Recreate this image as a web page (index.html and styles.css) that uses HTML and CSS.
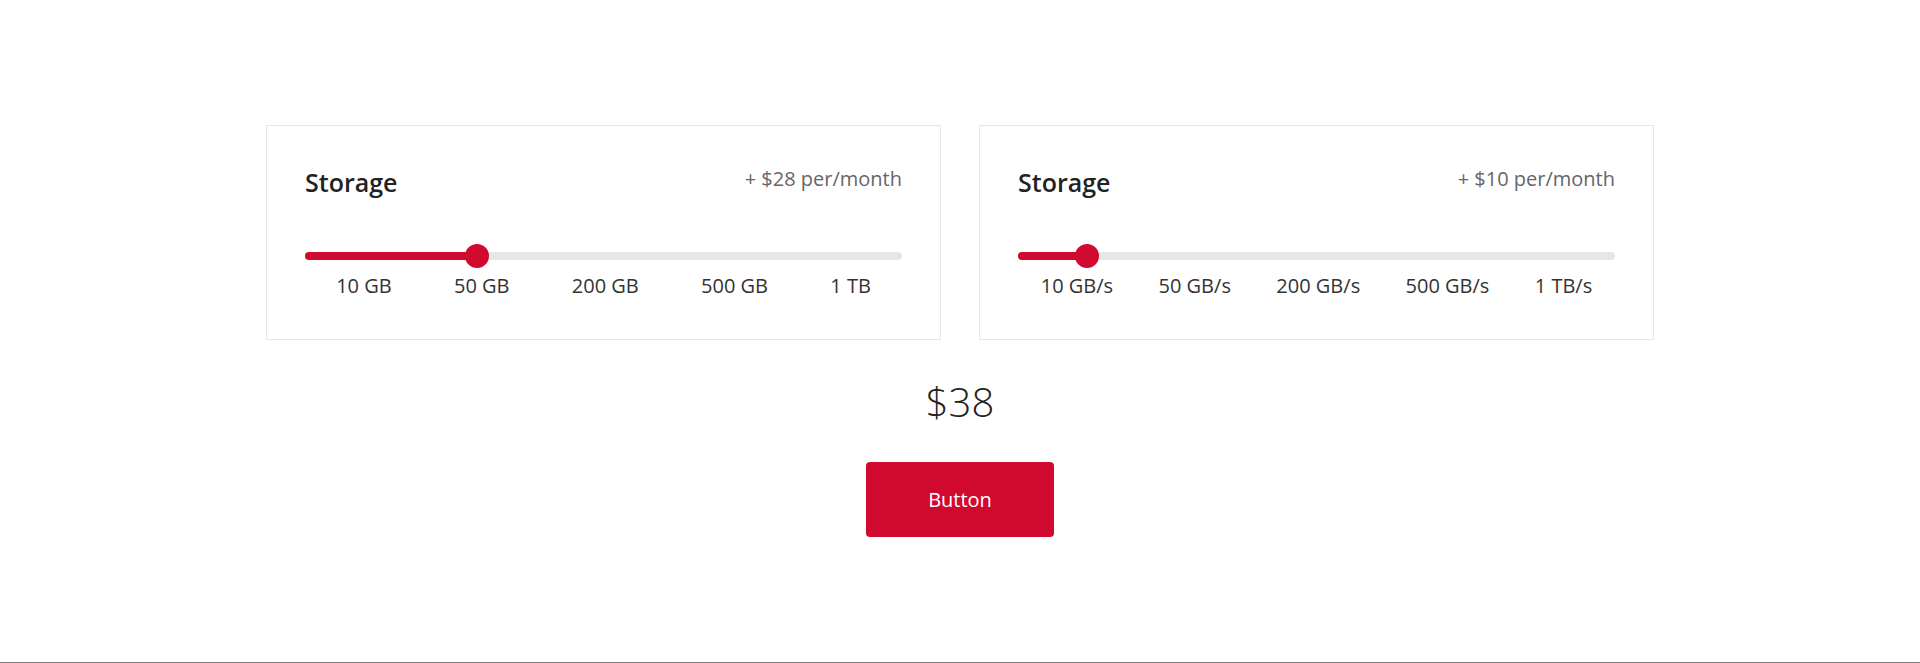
FILE: index.html
```html
<!DOCTYPE html>
<html lang="en">
<head>
<meta charset="utf-8">
<title>Storage pricing</title>
<link rel="stylesheet" href="styles.css">
</head>
<body>
<div class="page">
  <div class="cards">
    <section class="card">
      <div class="card-head">
        <h2 class="card-title">Storage</h2>
        <span class="card-price">+ $28 per/month</span>
      </div>
      <div class="slider">
        <div class="track">
          <div class="fill" style="width: 172px"></div>
          <div class="thumb" style="left: 172px"></div>
        </div>
      </div>
      <div class="labels">
        <span>10 GB</span><span>50 GB</span><span>200 GB</span><span>500 GB</span><span>1 TB</span>
      </div>
    </section>
    <section class="card">
      <div class="card-head">
        <h2 class="card-title">Storage</h2>
        <span class="card-price">+ $10 per/month</span>
      </div>
      <div class="slider">
        <div class="track">
          <div class="fill" style="width: 69px"></div>
          <div class="thumb" style="left: 69px"></div>
        </div>
      </div>
      <div class="labels">
        <span>10 GB/s</span><span>50 GB/s</span><span>200 GB/s</span><span>500 GB/s</span><span>1 TB/s</span>
      </div>
    </section>
  </div>
  <div class="total">$38</div>
  <button class="btn" type="button">Button</button>
</div>
</body>
</html>
```

FILE: styles.css
```css
* { box-sizing: border-box; }
html, body { margin: 0; padding: 0; background: #fff; }
body { font-family: "Open Sans", "Liberation Sans", sans-serif; color: #222; }

.page {
  height: 663px;
  border-bottom: 1px solid #7f7f7f;
  display: flex;
  flex-direction: column;
  align-items: center;
  padding-top: 125px;
}

.cards {
  display: flex;
  gap: 38px;
}

.card {
  width: 675px;
  border: 1px solid #e6e6e6;
  padding: 39px 38px 40px;
}

.card-head {
  display: flex;
  justify-content: space-between;
  align-items: flex-start;
}

.card-title {
  margin: 0;
  font-size: 25px;
  font-weight: 600;
  line-height: normal;
  color: #222;
}

.card-price {
  font-size: 20px;
  color: #666;
  line-height: normal;
}

.slider {
  margin-top: 45px;
  height: 24px;
  display: flex;
  align-items: center;
}

.track {
  position: relative;
  width: 100%;
  height: 8px;
  border-radius: 4px;
  background: #e6e6e6;
}

.fill {
  height: 100%;
  border-radius: 4px;
  background: #d00a2e;
}

.thumb {
  position: absolute;
  top: 50%;
  width: 24px;
  height: 24px;
  margin: -12px 0 0 -12px;
  border-radius: 50%;
  background: #d00a2e;
}

.labels {
  margin-top: 4px;
  display: flex;
  justify-content: space-around;
  font-size: 20px;
  color: #333;
  line-height: normal;
}

.total {
  margin-top: 34px;
  font-size: 40px;
  font-weight: 300;
  color: #222;
  line-height: normal;
}

.btn {
  margin-top: 33px;
  width: 188px;
  height: 75px;
  border: none;
  border-radius: 4px;
  background: #d00a2e;
  color: #fff;
  font-family: "Open Sans", "Liberation Sans", sans-serif;
  font-size: 20px;
  cursor: pointer;
}
```
